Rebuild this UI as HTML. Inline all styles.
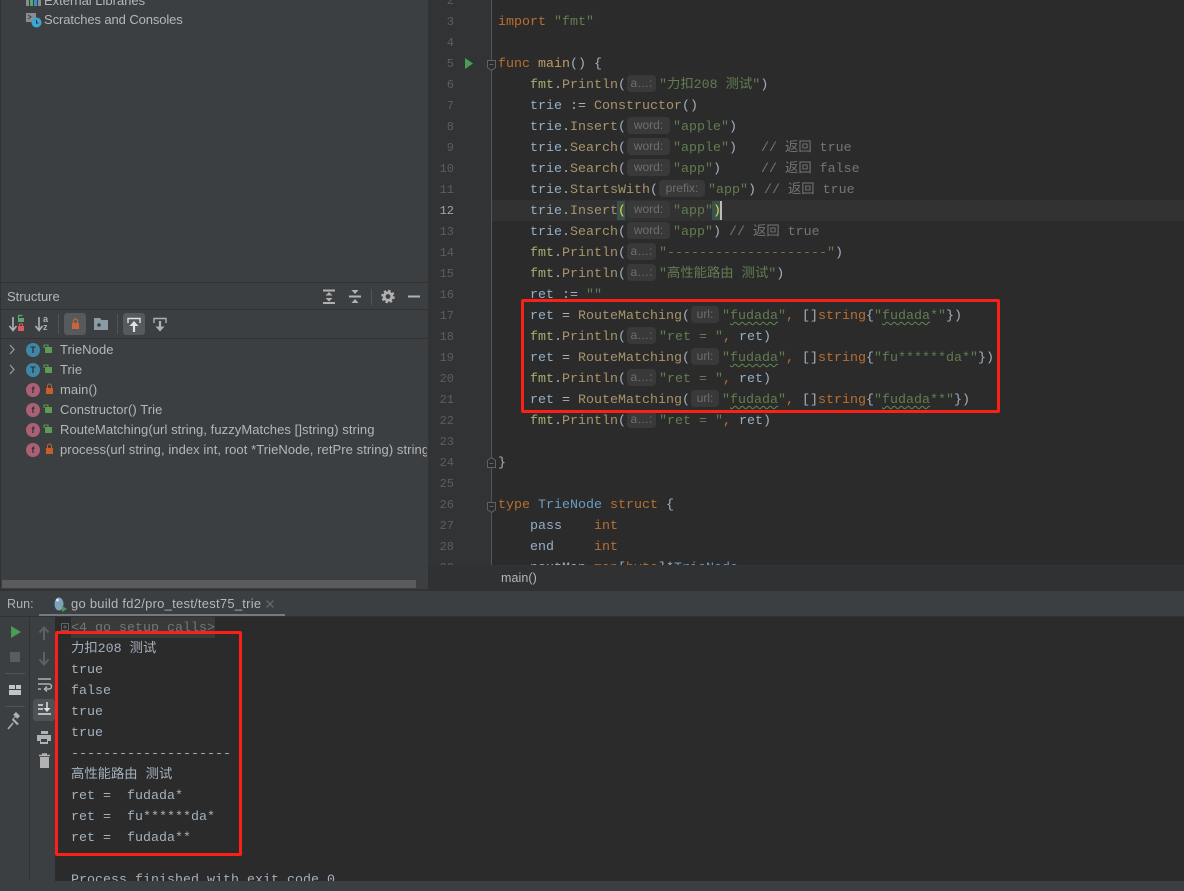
<!DOCTYPE html>
<html><head><meta charset="utf-8"><style>
*{box-sizing:border-box}
html,body{margin:0;padding:0}
body{width:1184px;height:883px;overflow:hidden;position:relative;background:#3c3f41;font-family:"Liberation Sans","Noto Sans CJK SC",sans-serif;color:#bbb}
.a{position:absolute}
.t{position:absolute;font-size:13px;line-height:20px;white-space:nowrap;color:#b4b6b8;letter-spacing:.07px}
.c{position:absolute;font-family:"Liberation Mono","Noto Sans CJK SC",monospace;font-size:13.33px;line-height:21px;height:21px;white-space:pre;color:#a4b1bd}
.n{position:absolute;left:428px;width:26px;text-align:right;font-family:"Liberation Mono",monospace;font-size:12px;line-height:21px;color:#5b5e61}
.h{display:inline-block;height:17px;line-height:16px;vertical-align:1px;background:#393939;border-radius:4px;color:#6e6e6e;font:12px/16px "Liberation Sans",sans-serif;text-align:center;margin:0 3px 0 1px}
.h1{width:29px}.h2{width:43px}.h3{width:46px}.h4{width:28px}
.p{color:#a3b06f}.m{color:#a8946b}.v{color:#94afc6}.s{color:#627d50}.k{color:#b86f32}.g{color:#757575}.y{color:#6a9cc4}.f{color:#bd9c66}
.u{text-decoration:underline wavy #5f8a4c 1px;text-underline-offset:2px}
.i{position:absolute;width:14px;height:14px;border-radius:50%;color:#2f3133;font:bold 9px/14px "Liberation Sans",sans-serif;text-align:center}
</style></head><body>

<!-- project tree -->
<svg class="a" style="left:26px;top:0" width="18" height="7"><rect x="0" y="0" width="3" height="6" fill="#8a8d8f"/><rect x="4" y="0" width="3" height="6" fill="#59a869"/><rect x="8" y="0" width="3" height="6" fill="#3592c4"/><rect x="12" y="0" width="3" height="6" fill="#8a8d8f"/></svg>
<div class="t" style="left:44px;top:-9px;letter-spacing:0">External Libraries</div>
<svg class="a" style="left:26px;top:12px" width="16" height="17"><rect x="0" y="1" width="10" height="9" fill="#8a8d8f"/><path d="M2 3l3 2-3 2" stroke="#3c3f41" fill="none"/><circle cx="10.500" cy="10.500" r="5" fill="#3ba7d6"/><path d="M10.500 8v3h2" stroke="#2b2b2b" fill="none"/></svg>
<div class="t" style="left:44px;top:10px;letter-spacing:-.1px">Scratches and Consoles</div>

<div class="a" style="left:0;top:0;width:1px;height:590px;background:#323232"></div>
<div class="a" style="left:0;top:282px;width:428px;height:1px;background:#323232"></div>
<div class="a" style="left:0;top:309px;width:428px;height:1px;background:#323232"></div>
<div class="a" style="left:0;top:338px;width:428px;height:1px;background:#323232"></div>

<div class="t" style="left:7px;top:287px;letter-spacing:0">Structure</div>
<svg class="a" style="left:315px;top:285px" width="112" height="24" fill="none">
<path d="M8 5.500h12M8 18h12" stroke="#afb1b3" stroke-width="2"/>
<path d="M10.500 10.500l3.500-3.500 3.500 3.500zM10.500 13l3.500 3.500 3.500-3.500z" fill="#afb1b3"/>
<path d="M34 11.500h12" stroke="#afb1b3" stroke-width="2"/>
<path d="M36.500 5h7L40 9zM36.500 18h7L40 14z" fill="#afb1b3"/>
<path d="M56.500 4v16" stroke="#515456"/>
<circle cx="73" cy="11.500" r="3.800" stroke="#afb1b3" stroke-width="2.800"/>
<circle cx="73" cy="11.500" r="5.800" stroke="#afb1b3" stroke-width="2" stroke-dasharray="2.500 2.050"/>
<path d="M93 11.500h12" stroke="#afb1b3" stroke-width="2"/></svg>

<!-- structure toolbar -->
<div class="a" style="left:64px;top:313px;width:22px;height:22px;background:#565a5d;border-radius:3px"></div>
<div class="a" style="left:123px;top:313px;width:22px;height:22px;background:#565a5d;border-radius:3px"></div>
<div class="a" style="left:58px;top:314px;width:1px;height:20px;background:#515456"></div>
<div class="a" style="left:117px;top:314px;width:1px;height:20px;background:#515456"></div>
<svg class="a" style="left:0;top:312px" width="170" height="26" fill="none">
<path d="M13 5v13M9.500 14l3.500 4.500 3.500-4.500" stroke="#afb1b3" stroke-width="1.600"/>
<rect x="18" y="6" width="6" height="4" fill="#59a869"/><path d="M18.500 6V3.500h4" stroke="#59a869" stroke-width="1.200"/>
<rect x="18" y="14" width="6" height="5" fill="#db5860"/><path d="M19.500 14v-2h3v2" stroke="#db5860"/>
<path d="M39 5v13M35.500 14l3.500 4.500 3.500-4.500" stroke="#afb1b3" stroke-width="1.600"/>
<text x="43" y="10" fill="#afb1b3" font-size="9" font-weight="bold" font-family="Liberation Sans">a</text><text x="43" y="18" fill="#afb1b3" font-size="9" font-weight="bold" font-family="Liberation Sans">z</text>
<rect x="72" y="11" width="7" height="6" fill="#c9653a"/><path d="M73.500 11V9a2 2 0 0 1 4 0v2" stroke="#c9653a" stroke-width="1.200"/>
<path d="M94 6h6l1.500 2h6.500v10H94z" fill="#8b9ba6"/><circle cx="99" cy="13" r="1.800" fill="#3c3f41"/>
<path d="M128 11V6.500h12V11" stroke="#dfe1e5" stroke-width="1.400"/>
<path d="M134 20v-9" stroke="#dfe1e5" stroke-width="2.200"/><path d="M129.500 14l4.500-5 4.500 5z" fill="#dfe1e5"/>
<path d="M154 11V6.500h12V11" stroke="#afb1b3" stroke-width="1.400"/>
<path d="M160 9v6" stroke="#afb1b3" stroke-width="2.200"/><path d="M155.500 14.500l4.500 5 4.500-5z" fill="#afb1b3"/>
</svg>

<!-- structure rows -->
<svg class="a" style="left:8px;top:344px" width="10" height="40" fill="none" stroke="#9a9c9e" stroke-width="1.200"><path d="M2 1l4 4.500-4 4.500M2 21l4 4.500-4 4.500"/></svg>
<div class="i" style="left:26px;top:343px;background:#3d87a8">T</div>
<div class="i" style="left:26px;top:363px;background:#3d87a8">T</div>
<div class="i" style="left:26px;top:383px;background:#ab6075">f</div>
<div class="i" style="left:26px;top:403px;background:#ab6075">f</div>
<div class="i" style="left:26px;top:423px;background:#ab6075">f</div>
<div class="i" style="left:26px;top:443px;background:#ab6075">f</div>
<svg class="a" style="left:43px;top:343px" width="12" height="120" fill="none">
<g fill="#5d9b52" stroke="none"><rect x="2" y="4" width="7" height="6"/><rect x="2" y="24" width="7" height="6"/><rect x="2" y="64" width="7" height="6"/><rect x="2" y="84" width="7" height="6"/></g>
<g stroke="#5d9b52"><path d="M1 5V2h4v2M1 25v-3h4v2M1 65v-3h4v2M1 85v-3h4v2"/></g>
<g fill="#c75f2c" stroke="none"><rect x="3" y="45" width="7" height="6"/><rect x="3" y="105" width="7" height="6"/></g>
<g stroke="#c75f2c"><path d="M4.500 45v-2a2 2 0 0 1 4 0v2M4.500 105v-2a2 2 0 0 1 4 0v2"/></g></svg>
<div class="t" style="left:60px;top:340px">TrieNode</div>
<div class="t" style="left:60px;top:360px">Trie</div>
<div class="t" style="left:60px;top:380px">main()</div>
<div class="t" style="left:60px;top:400px">Constructor() Trie</div>
<div class="t" style="left:60px;top:420px">RouteMatching(url string, fuzzyMatches []string) string</div>
<div class="t" style="left:60px;top:440px;width:367px;overflow:hidden">process(url string, index int, root *TrieNode, retPre string) string</div>

<div class="a" style="left:2px;top:580px;width:414px;height:8px;background:#595b5d"></div>

<!-- editor -->
<div class="a" style="left:428px;top:0;width:756px;height:565px;background:#2b2b2b"></div>
<div class="a" style="left:428px;top:0;width:64px;height:565px;background:#313335"></div>
<div class="a" style="left:491px;top:0;width:1px;height:565px;background:#555"></div>
<div class="a" style="left:492px;top:200px;width:692px;height:21px;background:#323232"></div>

<div class="n" style="top:-9px">2</div><div class="n" style="top:12px">3</div><div class="n" style="top:33px">4</div><div class="n" style="top:54px">5</div><div class="n" style="top:75px">6</div><div class="n" style="top:96px">7</div><div class="n" style="top:117px">8</div><div class="n" style="top:138px">9</div><div class="n" style="top:159px">10</div><div class="n" style="top:180px">11</div><div class="n" style="top:201px;color:#a4a3a3">12</div><div class="n" style="top:222px">13</div><div class="n" style="top:243px">14</div><div class="n" style="top:264px">15</div><div class="n" style="top:285px">16</div><div class="n" style="top:306px">17</div><div class="n" style="top:327px">18</div><div class="n" style="top:348px">19</div><div class="n" style="top:369px">20</div><div class="n" style="top:390px">21</div><div class="n" style="top:411px">22</div><div class="n" style="top:432px">23</div><div class="n" style="top:453px">24</div><div class="n" style="top:474px">25</div><div class="n" style="top:495px">26</div><div class="n" style="top:516px">27</div><div class="n" style="top:537px">28</div><div class="n" style="top:558px">29</div>

<svg class="a" style="left:465px;top:58px" width="9" height="11"><path d="M0 0l8 5.500-8 5.500z" fill="#499c54"/></svg>
<svg class="a" style="left:487px;top:0" width="10" height="530" fill="#2b2b2b" stroke="#606366"><path d="M.5 60.500h8v7l-4 3-4-3z"/><path d="M2.500 64.500h4"/><path d="M.5 467.500v-7l4-3 4 3v7z"/><path d="M2.500 463.500h4"/><path d="M.5 502.500h8v7l-4 3-4-3z"/><path d="M2.500 506.500h4"/></svg>

<div class="c k" style="left:498px;top:12px">import <span class="s">"fmt"</span></div>
<div class="c" style="left:498px;top:54px"><span class="k">func</span> <span class="f">main</span>() {</div>
<div class="c" style="left:530px;top:75px"><span class="p">fmt</span>.<span class="m">Println</span>(<span class="h h1">a…:</span><span class="s">"力扣208 测试"</span>)</div>
<div class="c" style="left:530px;top:96px"><span class="v">trie</span> := <span class="m">Constructor</span>()</div>
<div class="c" style="left:530px;top:117px"><span class="v">trie</span>.<span class="m">Insert</span>(<span class="h h2">word:</span><span class="s">"apple"</span>)</div>
<div class="c" style="left:530px;top:138px"><span class="v">trie</span>.<span class="m">Search</span>(<span class="h h2">word:</span><span class="s">"apple"</span>)   <span class="g">// 返回 true</span></div>
<div class="c" style="left:530px;top:159px"><span class="v">trie</span>.<span class="m">Search</span>(<span class="h h2">word:</span><span class="s">"app"</span>)     <span class="g">// 返回 false</span></div>
<div class="c" style="left:530px;top:180px"><span class="v">trie</span>.<span class="m">StartsWith</span>(<span class="h h3">prefix:</span><span class="s">"app"</span>) <span class="g">// 返回 true</span></div>
<div class="a" style="left:617px;top:201px;width:8px;height:19px;background:#3b514d"></div>
<div class="a" style="left:712px;top:201px;width:8px;height:19px;background:#3b514d"></div>
<div class="c" style="left:530px;top:201px"><span class="v">trie</span>.<span class="m">Insert</span><span style="color:#e8d63a">(</span><span class="h h2">word:</span><span class="s">"app"</span><span style="color:#e8d63a">)</span></div>
<div class="a" style="left:720px;top:201px;width:2px;height:19px;background:#bbb"></div>
<div class="c" style="left:530px;top:222px"><span class="v">trie</span>.<span class="m">Search</span>(<span class="h h2">word:</span><span class="s">"app"</span>) <span class="g">// 返回 true</span></div>
<div class="c" style="left:530px;top:243px"><span class="p">fmt</span>.<span class="m">Println</span>(<span class="h h1">a…:</span><span class="s">"--------------------"</span>)</div>
<div class="c" style="left:530px;top:264px"><span class="p">fmt</span>.<span class="m">Println</span>(<span class="h h1">a…:</span><span class="s">"高性能路由 测试"</span>)</div>
<div class="c" style="left:530px;top:285px"><span class="v">ret</span> := <span class="s">""</span></div>
<div class="c" style="left:530px;top:306px"><span class="v">ret</span> = <span class="m">RouteMatching</span>(<span class="h h4">url:</span><span class="s">"<span class="u">fudada</span>"</span><span class="k">,</span> []<span class="k">string</span>{<span class="s">"<span class="u">fudada</span>*"</span>})</div>
<div class="c" style="left:530px;top:327px"><span class="p">fmt</span>.<span class="m">Println</span>(<span class="h h1">a…:</span><span class="s">"ret = "</span><span class="k">,</span> <span class="v">ret</span>)</div>
<div class="c" style="left:530px;top:348px"><span class="v">ret</span> = <span class="m">RouteMatching</span>(<span class="h h4">url:</span><span class="s">"<span class="u">fudada</span>"</span><span class="k">,</span> []<span class="k">string</span>{<span class="s">"fu******da*"</span>})</div>
<div class="c" style="left:530px;top:369px"><span class="p">fmt</span>.<span class="m">Println</span>(<span class="h h1">a…:</span><span class="s">"ret = "</span><span class="k">,</span> <span class="v">ret</span>)</div>
<div class="c" style="left:530px;top:390px"><span class="v">ret</span> = <span class="m">RouteMatching</span>(<span class="h h4">url:</span><span class="s">"<span class="u">fudada</span>"</span><span class="k">,</span> []<span class="k">string</span>{<span class="s">"<span class="u">fudada</span>**"</span>})</div>
<div class="c" style="left:530px;top:411px"><span class="p">fmt</span>.<span class="m">Println</span>(<span class="h h1">a…:</span><span class="s">"ret = "</span><span class="k">,</span> <span class="v">ret</span>)</div>
<div class="c" style="left:498px;top:453px">}</div>
<div class="c" style="left:498px;top:495px"><span class="k">type</span> <span class="y">TrieNode</span> <span class="k">struct</span> {</div>
<div class="c v" style="left:530px;top:516px">pass    <span class="k">int</span></div>
<div class="c v" style="left:530px;top:537px">end     <span class="k">int</span></div>
<div class="c v" style="left:530px;top:558px">nextMap <span class="k">map</span>[<span class="k">byte</span>]*<span class="y">TrieNode</span></div>

<!-- breadcrumb -->
<div class="a" style="left:428px;top:565px;width:756px;height:25px;background:#2f3133;border-top:1px solid #323232"></div>
<div class="t" style="left:501px;top:568px;font-size:12.500px">main()</div>

<!-- red box editor -->
<div class="a" style="left:521px;top:299px;width:479px;height:114px;border:3px solid #fb2018;border-radius:2px;z-index:5"></div>

<!-- run panel -->
<div class="a" style="left:0;top:589px;width:1184px;height:2px;background:#323232"></div>
<div class="t" style="left:7px;top:594px;font-size:12.500px;color:#afb1b3">Run:</div>
<svg class="a" style="left:53px;top:596px" width="15" height="17"><ellipse cx="6" cy="8" rx="4.500" ry="6.500" fill="#7da3bd"/><circle cx="4.500" cy="4" r="1.500" fill="#dfe6ea"/><path d="M9 10l5 3-5 3z" fill="#499c54"/></svg>
<div class="t" style="left:71px;top:594px;letter-spacing:.25px">go build fd2/pro_test/test75_trie</div>
<svg class="a" style="left:265px;top:599px" width="10" height="10" stroke="#6e7072" fill="none"><path d="M1.500 1.500l7 7M8.500 1.500l-7 7"/></svg>
<div class="a" style="left:39px;top:614px;width:246px;height:3px;background:#747a80"></div>
<div class="a" style="left:0;top:616px;width:1184px;height:1px;background:#323232"></div>

<div class="a" style="left:55px;top:617px;width:1129px;height:266px;background:#2b2b2b"></div>
<div class="a" style="left:29px;top:617px;width:1px;height:266px;background:#323232"></div>
<div class="a" style="left:33px;top:699px;width:22px;height:22px;background:#4e5254;border-radius:3px"></div>

<svg class="a" style="left:0;top:618px" width="56" height="160" fill="none"><g transform="translate(0,-618)">
<path d="M11 626l10 6-10 6z" fill="#499c54"/>
<rect x="10" y="652" width="10" height="10" fill="#5a5d5f"/>
<path d="M5 673.500h20M5 706.500h20" stroke="#515456"/>
<path d="M9 685h6v4H9zM16 685h5v4h-5zM9 690h12v5H9z" fill="#c2c4c6"/>
<path d="M44 640v-12M39.500 632.500l4.500-5 4.500 5" stroke="#5e6163" stroke-width="2"/>
<path d="M44 652v12M39.500 659.500l4.500 5 4.500-5" stroke="#5e6163" stroke-width="2"/>
<path d="M38 679h13M38 684h11a2.500 2.500 0 0 1 0 5h-4M47 686.500l-2.500 2.500 2.500 2.500M38 689h3" stroke="#afb1b3" stroke-width="1.500"/>
<path d="M38 705h5M38 709h5M38 714h13M47 702v8" stroke="#dfe1e5" stroke-width="1.500"/><path d="M43.500 708h7l-3.500 4z" fill="#dfe1e5"/>
<path d="M41 731h7v3h-7zM37 735h14v6h-3v3h-8v-3h-3z" fill="#afb1b3"/><path d="M41 739h6v3h-6z" fill="#3c3f41"/>
<path d="M40 757h9v11h-9z" fill="#afb1b3"/><path d="M39 755.500h11M42 754h5" stroke="#afb1b3" stroke-width="1.500"/>
<path d="M12 720l4-3 1 2 3-3-4-4-3 3 2 1-3 4z" fill="#afb1b3"/><path d="M13 723l-5 6" stroke="#afb1b3" stroke-width="1.500"/><path d="M13 718l6 6-2 1-5-5z" fill="#afb1b3"/>
</g></svg>

<svg class="a" style="left:61px;top:623px" width="9" height="9" fill="none" stroke="#606366"><path d="M.5.500h7v7h-7zM2 4h4M4 2v4"/></svg>
<div class="a" style="left:71px;top:617px;width:144px;height:21px;background:#3a3a3a"></div>
<div class="c" style="left:71px;top:618px;color:#757575">&lt;4 go setup calls&gt;</div>
<div class="c" style="left:71px;top:639px">力扣208 测试</div>
<div class="c" style="left:71px;top:660px">true</div>
<div class="c" style="left:71px;top:681px">false</div>
<div class="c" style="left:71px;top:702px">true</div>
<div class="c" style="left:71px;top:723px">true</div>
<div class="c" style="left:71px;top:744px">--------------------</div>
<div class="c" style="left:71px;top:765px">高性能路由 测试</div>
<div class="c" style="left:71px;top:786px">ret =  fudada*</div>
<div class="c" style="left:71px;top:807px">ret =  fu******da*</div>
<div class="c" style="left:71px;top:828px">ret =  fudada**</div>
<div class="c" style="left:71px;top:870px">Process finished with exit code 0</div>
<div class="a" style="left:0;top:881px;width:1184px;height:2px;background:#3c3f41"></div>

<!-- red box console -->
<div class="a" style="left:55px;top:631px;width:187px;height:225px;border:3px solid #fb2018;border-radius:2px;z-index:5"></div>
</body></html>
